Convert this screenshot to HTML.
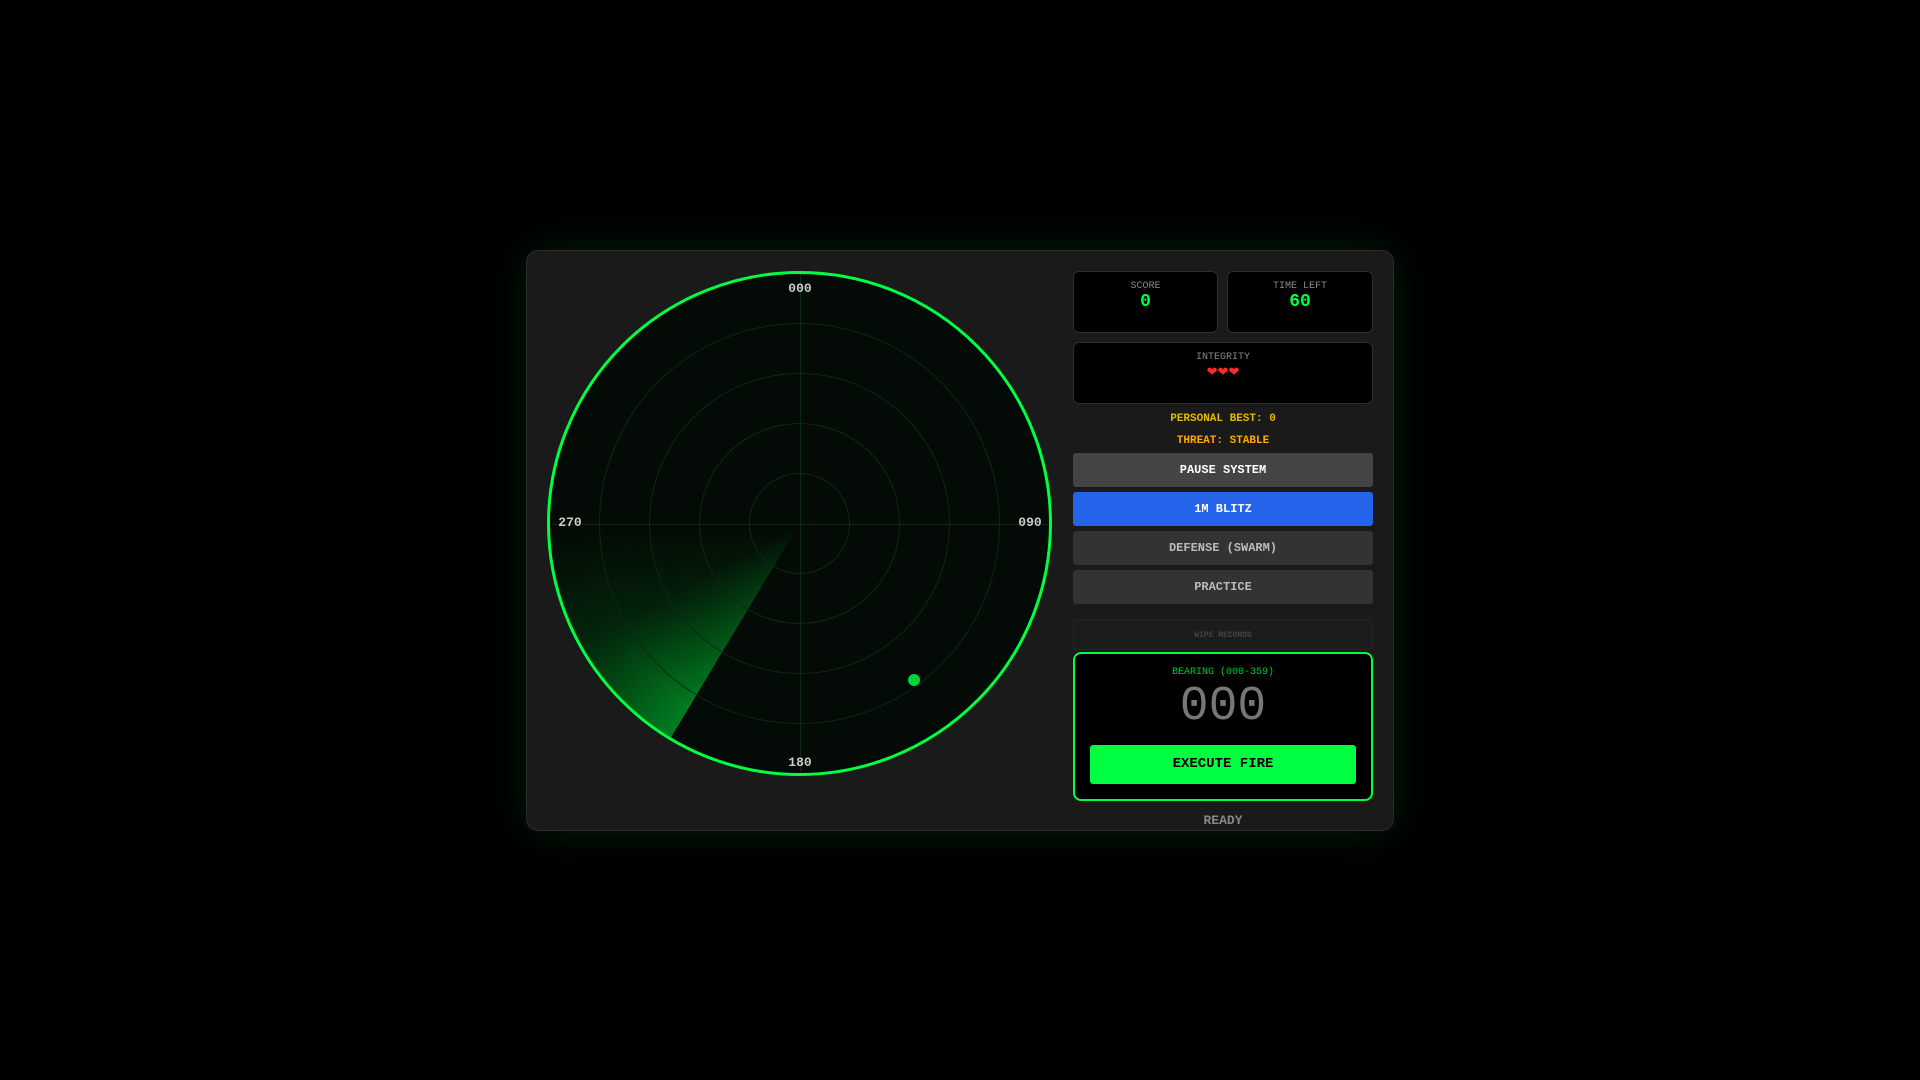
<!DOCTYPE html>
<html><head><style>
*{margin:0;padding:0;box-sizing:border-box}
body{width:1920px;height:1080px;background:#000;font-family:"Liberation Mono",monospace;position:relative;overflow:hidden}
.wrap{position:absolute;left:526px;top:250px;width:868px;height:581px;background:#1a1a1a;border:1px solid #2c2c2c;border-radius:12px;box-shadow:0 0 40px rgba(0,255,65,0.12)}
.radar{position:absolute;left:547px;top:271px;width:505px;height:505px;border-radius:50%;border:3px solid #00ff41;background:#040a05;overflow:hidden}
.ring{position:absolute;border:1px solid #0b2a11;border-radius:50%}
.lh{position:absolute;left:0;right:0;top:50%;height:1px;background:#0b2a11}
.lv{position:absolute;top:0;bottom:0;left:50%;width:1px;background:#0b2a11}
.sweep{position:absolute;inset:0;border-radius:50%;background:conic-gradient(from 211deg,rgba(0,200,50,0.6) 0deg,rgba(0,120,30,0.25) 30deg,transparent 58deg,transparent 360deg);-webkit-mask:radial-gradient(circle,transparent 0,rgba(0,0,0,.4) 20%,#000 60%);mask:radial-gradient(circle,transparent 0,rgba(0,0,0,.4) 20%,#000 60%)}
.lbl{position:absolute;color:#ccc;font-weight:bold;font-size:13px;width:40px;text-align:center;line-height:16px}
.blip{position:absolute;left:908px;top:674px;width:12px;height:12px;border-radius:50%;background:#00d43a}
.box{position:absolute;background:#000;border:1px solid #2e2e2e;border-radius:6px;text-align:center}
.box .t{color:#888;font-size:10px;margin-top:9px}
.box .v{color:#00ff41;font-size:18px;font-weight:bold;line-height:20px}
.txt{position:absolute;left:1073px;width:300px;text-align:center;font-weight:bold;font-size:11px}
.btn{position:absolute;left:1073px;width:300px;height:34px;border-radius:3px;text-align:center;line-height:34px;font-weight:bold;font-size:12px}
</style></head><body>
<div class="wrap"></div>
<div class="radar">
<div class="sweep"></div>
<div class="ring" style="left:199px;top:199px;width:101px;height:101px"></div>
<div class="ring" style="left:149px;top:149px;width:201px;height:201px"></div>
<div class="ring" style="left:99px;top:99px;width:301px;height:301px"></div>
<div class="ring" style="left:49px;top:49px;width:401px;height:401px"></div>
<div class="lh"></div><div class="lv"></div>
</div>
<div class="lbl" style="left:780px;top:281px">000</div>
<div class="lbl" style="left:780px;top:755px">180</div>
<div class="lbl" style="left:550px;top:515px">270</div>
<div class="lbl" style="left:1010px;top:515px">090</div>
<div class="blip"></div>
<div class="box" style="left:1073px;top:271px;width:145px;height:62px"><div class="t">SCORE</div><div class="v">0</div></div>
<div class="box" style="left:1227px;top:271px;width:146px;height:62px"><div class="t">TIME LEFT</div><div class="v">60</div></div>
<div class="box" style="left:1073px;top:342px;width:300px;height:62px"><div class="t">INTEGRITY</div><div style="color:#ff2a2a;font-family:'DejaVu Sans',sans-serif;font-size:13px;line-height:20px;letter-spacing:0">❤❤❤</div></div>
<div class="txt" style="top:413px;color:#e6b800">PERSONAL BEST: 0</div>
<div class="txt" style="top:435px;color:#ffaa00">THREAT: STABLE</div>
<div class="btn" style="top:453px;background:#444;color:#fff">PAUSE SYSTEM</div>
<div class="btn" style="top:492px;background:#2563eb;color:#fff">1M BLITZ</div>
<div class="btn" style="top:531px;background:#333;color:#bbb">DEFENSE (SWARM)</div>
<div class="btn" style="top:570px;background:#333;color:#bbb">PRACTICE</div>
<div class="btn" style="top:619px;height:31px;line-height:31px;background:#1c1c1c;border:1px solid #252525;color:#444;font-size:8px">WIPE RECORDS</div>
<div style="position:absolute;left:1073px;top:652px;width:300px;height:149px;background:#000;border:2px solid #00ff41;border-radius:8px"></div>
<div class="txt" style="top:667px;color:#00c832;font-weight:normal;font-size:10px">BEARING (000-359)</div>
<div class="txt" style="top:681px;color:#777;font-weight:normal;font-size:48px;line-height:52px">000</div>
<div style="position:absolute;left:1090px;top:745px;width:266px;height:39px;background:#00ff41;border-radius:3px;text-align:center;line-height:39px;font-weight:bold;font-size:14px;color:#000">EXECUTE FIRE</div>
<div class="txt" style="top:813px;color:#888;font-size:13px">READY</div>
</body></html>
